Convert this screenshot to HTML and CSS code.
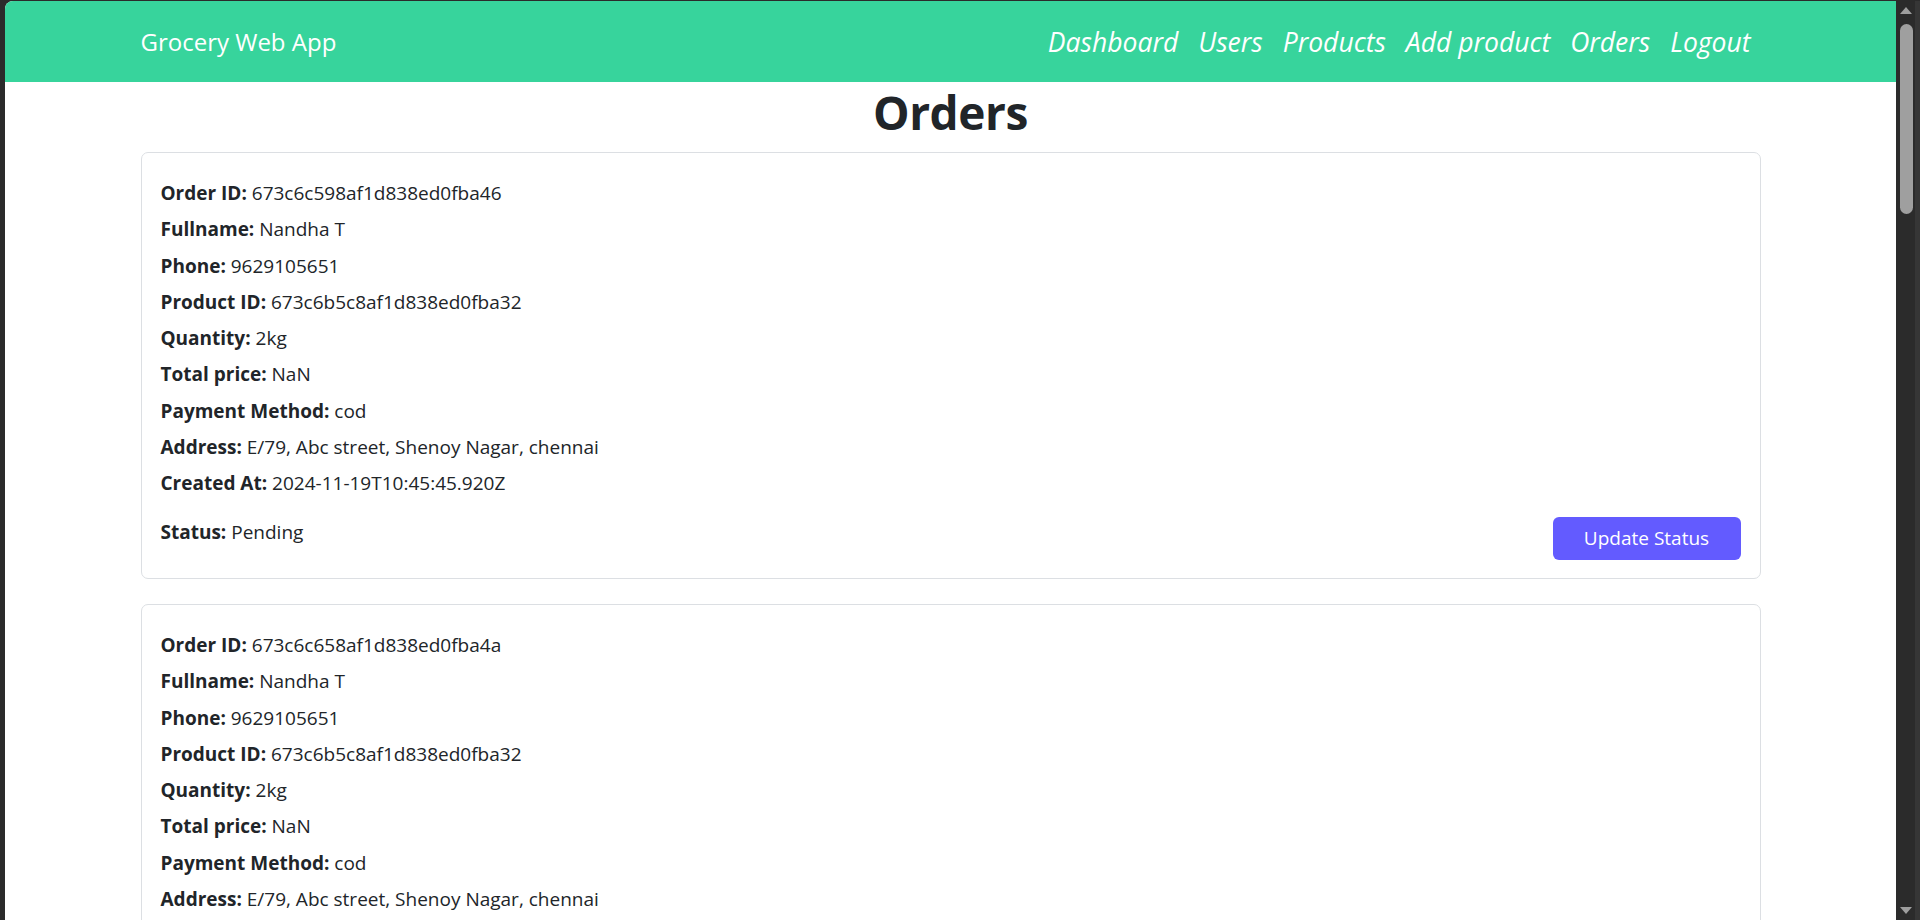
FILE: index.html
```html
<!DOCTYPE html>
<html lang="en">
<head>
<meta charset="utf-8">
<title>Grocery Web App - Orders</title>
<link rel="stylesheet" href="styles.css">
</head>
<body class="screen">
  <div class="frame-left"></div>
  <div class="viewport">
    <header class="navbar">
      <div class="container nav-inner">
        <a class="brand" href="#">Grocery Web App</a>
        <nav class="nav-links">
          <a class="nav-link" href="#">Dashboard</a>
          <a class="nav-link" href="#">Users</a>
          <a class="nav-link" href="#">Products</a>
          <a class="nav-link" href="#">Add product</a>
          <a class="nav-link" href="#">Orders</a>
          <a class="nav-link" href="#">Logout</a>
        </nav>
      </div>
    </header>
    <main class="container">
      <h1 class="page-title">Orders</h1>

      <section class="order-card">
        <p class="row"><b>Order ID:</b> 673c6c598af1d838ed0fba46</p>
        <p class="row"><b>Fullname:</b> Nandha T</p>
        <p class="row"><b>Phone:</b> 9629105651</p>
        <p class="row"><b>Product ID:</b> 673c6b5c8af1d838ed0fba32</p>
        <p class="row"><b>Quantity:</b> 2kg</p>
        <p class="row"><b>Total price:</b> NaN</p>
        <p class="row"><b>Payment Method:</b> cod</p>
        <p class="row"><b>Address:</b> E/79, Abc street, Shenoy Nagar, chennai</p>
        <p class="row"><b>Created At:</b> 2024-11-19T10:45:45.920Z</p>
        <div class="card-footer">
          <p class="row status"><b>Status:</b> Pending</p>
          <button class="btn-update" type="button">Update Status</button>
        </div>
      </section>

      <section class="order-card">
        <p class="row"><b>Order ID:</b> 673c6c658af1d838ed0fba4a</p>
        <p class="row"><b>Fullname:</b> Nandha T</p>
        <p class="row"><b>Phone:</b> 9629105651</p>
        <p class="row"><b>Product ID:</b> 673c6b5c8af1d838ed0fba32</p>
        <p class="row"><b>Quantity:</b> 2kg</p>
        <p class="row"><b>Total price:</b> NaN</p>
        <p class="row"><b>Payment Method:</b> cod</p>
        <p class="row"><b>Address:</b> E/79, Abc street, Shenoy Nagar, chennai</p>
        <p class="row"><b>Created At:</b> 2024-11-19T10:46:00.000Z</p>
        <div class="card-footer">
          <p class="row status"><b>Status:</b> Pending</p>
          <button class="btn-update" type="button">Update Status</button>
        </div>
      </section>
    </main>
  </div>
  <div class="scrollbar">
    <span class="sb-arrow sb-up"></span>
    <span class="sb-thumb"></span>
    <span class="sb-track"></span>
    <span class="sb-arrow sb-down"></span>
  </div>
  <div class="frame-right"></div>
</body>
</html>
```

FILE: styles.css
```css
* { box-sizing: border-box; }

html, body {
  margin: 0;
  height: 920px;
  overflow: hidden;
}

.screen {
  display: flex;
  padding-top: 1px;
  background: #2b2b2b;
  font-family: "Open Sans", "Noto Sans", sans-serif;
  color: #212529;
}

.frame-left {
  width: 5px;
  flex: none;
}

.viewport {
  width: 1891px;
  flex: none;
  height: 919px;
  background: #ffffff;
  border-top-left-radius: 8px;
  overflow: hidden;
}

.container {
  width: 1620px;
  margin: 0 auto;
}

/* navbar */
.navbar {
  height: 81px;
  background: #37d49c;
}

.nav-inner {
  height: 100%;
  display: flex;
  align-items: center;
  justify-content: space-between;
}

.brand {
  color: #ffffff;
  text-decoration: none;
  font-size: 24px;
  line-height: 30px;
}

.nav-links {
  display: flex;
}

.nav-link {
  color: #ffffff;
  text-decoration: none;
  font-style: italic;
  font-size: 26.5px;
  line-height: 34px;
  padding: 0 10px;
}

/* title */
.page-title {
  margin: 0 0 10px;
  text-align: center;
  font-size: 46px;
  line-height: 60px;
  font-weight: 700;
  letter-spacing: -0.4px;
  color: #212529;
}

/* cards */
.order-card {
  border: 1px solid #dcdfe3;
  border-radius: 7px;
  padding: 25px 19px 18px 19px;
  margin-bottom: 25px;
}

.row {
  margin: 0 0 6.25px;
  font-size: 19px;
  line-height: 30px;
}

.row b {
  font-weight: 700;
}

.card-footer {
  display: flex;
  justify-content: space-between;
  align-items: flex-start;
  margin-top: 19px;
}

.status {
  margin: 0;
}

.btn-update {
  width: 188px;
  height: 43px;
  border: none;
  border-radius: 6px;
  background: #635bff;
  color: #ffffff;
  font-family: inherit;
  font-size: 19px;
  line-height: 43px;
  padding: 0;
}

/* scrollbar chrome */
.scrollbar {
  width: 19px;
  flex: none;
  height: 919px;
  background: #2b2b2b;
  display: flex;
  flex-direction: column;
  align-items: center;
  padding: 6px 0 6px 1px;
}

.sb-arrow {
  width: 0;
  height: 0;
  border-left: 6px solid transparent;
  border-right: 6px solid transparent;
  flex: none;
}

.sb-up {
  border-bottom: 7px solid #9e9e9e;
}

.sb-down {
  border-top: 7px solid #9e9e9e;
}

.sb-thumb {
  width: 13px;
  height: 190px;
  margin-top: 10px;
  border-radius: 7px;
  background: #9f9f9f;
  flex: none;
}

.sb-track {
  flex: 1;
}

.frame-right {
  width: 5px;
  flex: none;
  background: #363636;
}
```
